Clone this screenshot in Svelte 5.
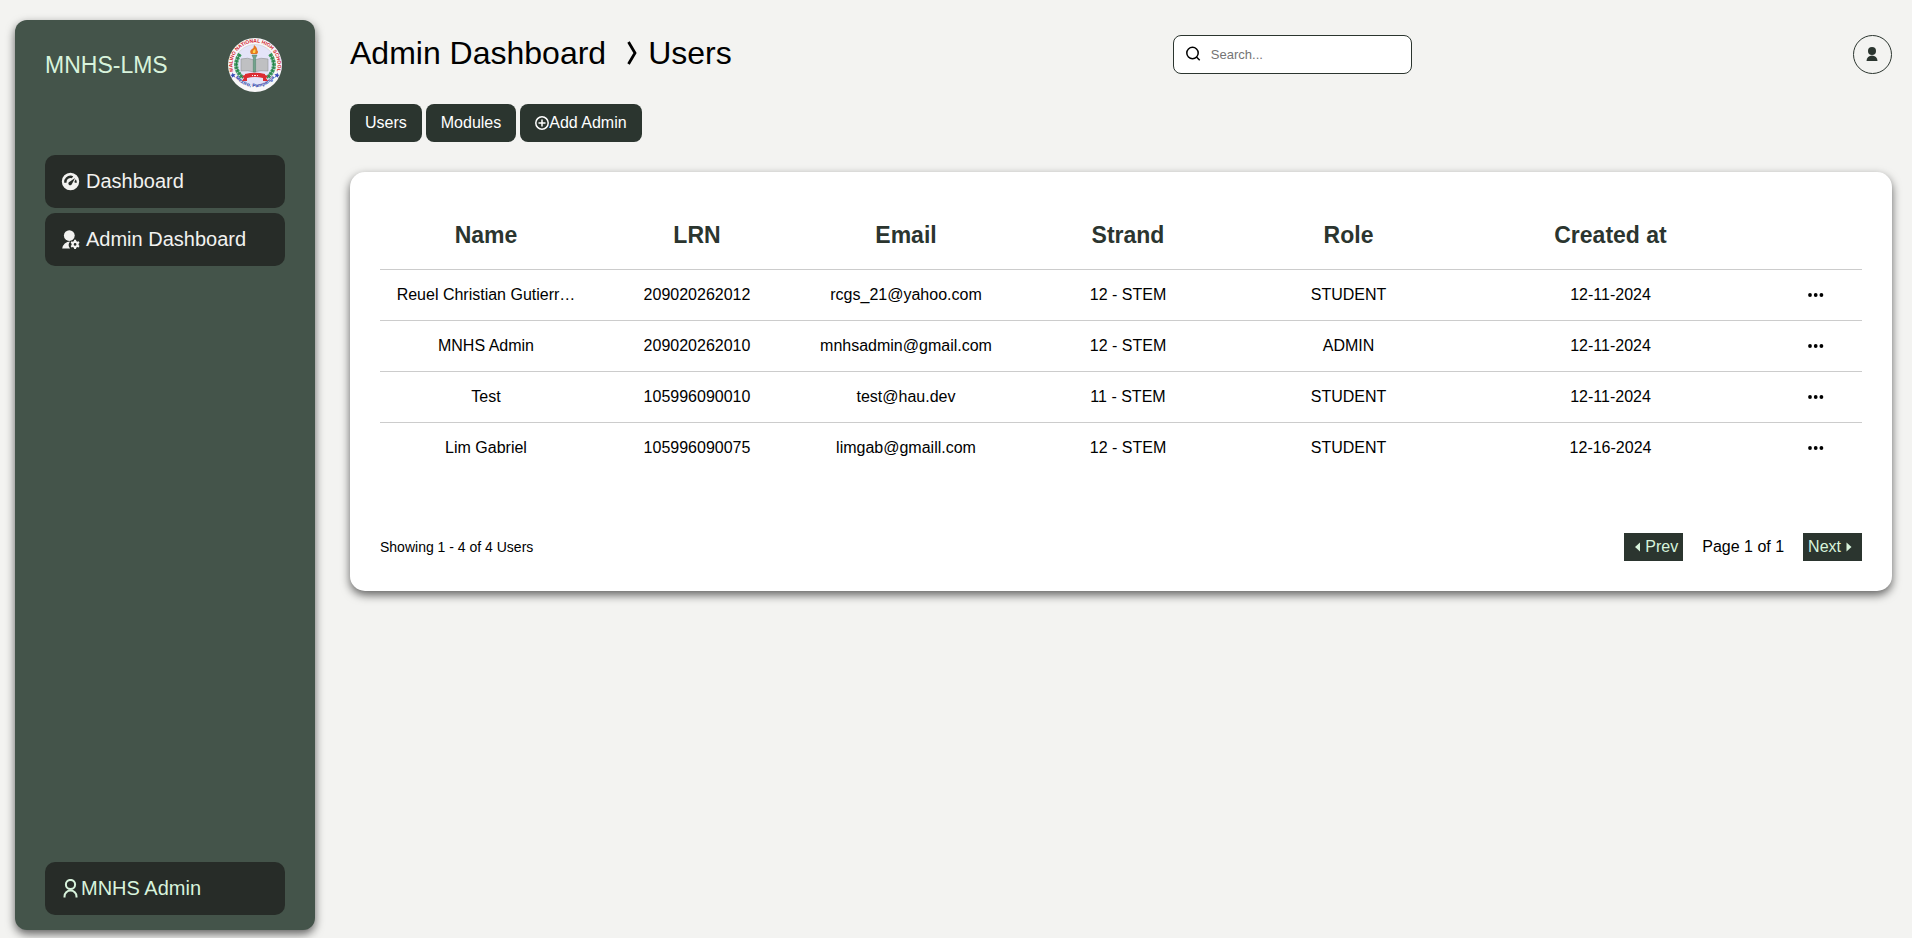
<script>
  const nav = [
    { label: 'Dashboard', icon: 'gauge' },
    { label: 'Admin Dashboard', icon: 'admin' }
  ];
  const columns = ['Name', 'LRN', 'Email', 'Strand', 'Role', 'Created at'];
  const users = [
    ['Reuel Christian Gutierr…', '209020262012', 'rcgs_21@yahoo.com', '12 - STEM', 'STUDENT', '12-11-2024'],
    ['MNHS Admin', '209020262010', 'mnhsadmin@gmail.com', '12 - STEM', 'ADMIN', '12-11-2024'],
    ['Test', '105996090010', 'test@hau.dev', '11 - STEM', 'STUDENT', '12-11-2024'],
    ['Lim Gabriel', '105996090075', 'limgab@gmaill.com', '12 - STEM', 'STUDENT', '12-16-2024']
  ];
  let search = $state('');
</script>

<div class="layout">
  <aside class="sidebar">
    <header class="brand">
      <span class="brand-name">MNHS-LMS</span>
      <svg class="logo" viewBox="0 0 54 54" aria-hidden="true">
        <defs>
          <path id="arc-top" d="M6 35.500A22.600 22.600 0 1 1 48 35.500" />
          <path id="arc-bottom" d="M4.500 34.500A24.600 24.600 0 0 0 49.500 34.500" />
        </defs>
        <circle cx="27" cy="27" r="27" fill="#f8f7f8" />
        <circle cx="27" cy="27" r="20.5" fill="#e4e4f8" stroke="#c9ccd2" stroke-width=".6" />
        <text class="seal red"><textPath href="#arc-top" startOffset="50%" text-anchor="middle">MALINO NATIONAL HIGH SCHOOL</textPath></text>
        <text class="seal blue"><textPath href="#arc-bottom" startOffset="50%" text-anchor="middle">Mexico, Pampanga</textPath></text>
        <path d="M4.600 34.600l1 1.700 2-.3-1.300 1.500.8 1.900-1.900-.8-1.500 1.300.2-2-1.800-1 2-.5zM49.400 34.600l-1 1.700-2-.3 1.300 1.500-.8 1.900 1.900-.8 1.500 1.300-.2-2 1.800-1-2-.5z" fill="#3347b4" />
        <path d="M12 16Q3 29 15 40M42 16Q51 29 39 40" fill="none" stroke="#3c9a5c" stroke-width="4" stroke-dasharray="2.6 .7" />
        <path d="M12 16Q3 29 15 40M42 16Q51 29 39 40" fill="none" stroke="#25804a" stroke-width="1" />
        <path d="M13 21q7-2 13 1 7-3 14-1v12q-7-1-14 1-6-2-13-1z" fill="#bfc0c2" stroke="#929397" stroke-width=".6" />
        <path d="M24 17h5l-1.400 3v14h-2.300V20z" fill="#72a48c" stroke="#4d7d67" stroke-width=".5" />
        <path d="M23 16q-2-3 1-5 2-1 2-4 4 3 3 5 2 2 0 4z" fill="#e37722" />
        <path d="M25 15q-1-2 2-4 1 2 0 4z" fill="#ffd34a" />
        <path d="M14 38l3-1v-1q10-2.500 20 0v1l3 1-2 2 2 3h-5v-3q-8-2-16 0v3h-5l2-3z" fill="#dc2c32" />
        <path d="M24 37.600h1m1 0h2m1 0h1" stroke="#fff" stroke-width="1" />
      </svg>
    </header>
    <nav class="nav">
      {#each nav as item}
        <a class="side-link" href="#{item.icon}">
          {#if item.icon === 'gauge'}
            <svg viewBox="0 0 24 24" fill="currentColor" aria-hidden="true">
              <path fill-rule="evenodd" d="M12 1a11 11 0 1 1 0 22 11 11 0 0 1 0-22zM12 4.500A8 8 0 0 0 4 12.500v1h3v-1a5 5 0 0 1 6.500-4.700l2-2.200A8 8 0 0 0 12 4.500zm5.800 3.200-6.900 4.500a2.300 2.300 0 1 0 2.900 2.900zM18.700 9l-1.600 2.700.2 1.800H20a8 8 0 0 0-1.300-4.500z" />
            </svg>
          {:else}
            <svg viewBox="0 0 24 24" fill="currentColor" aria-hidden="true">
              <circle cx="10.500" cy="7" r="6.800" />
              <path d="M1.500 23.500a10 10 0 0 1 10-9 7 7 0 0 0 0 9z" />
              <path fill-rule="evenodd" d="M16.300 14l.4-1.700h2.200l.4 1.700 1.300.8 1.700-.5 1.100 1.900-1.200 1.200v1.500l1.200 1.200-1.100 1.900-1.700-.5-1.300.8-.4 1.700h-2.200l-.4-1.700-1.300-.8-1.700.5-1.100-1.900 1.200-1.200v-1.500l-1.200-1.200 1.100-1.900 1.700.5zM17.800 16.500a1.700 1.700 0 1 0 0 3.400 1.700 1.700 0 0 0 0-3.400z" />
            </svg>
          {/if}
          <span>{item.label}</span>
        </a>
      {/each}
    </nav>
    <a class="side-link account" href="#account">
      <svg viewBox="0 0 20 20" fill="none" stroke="currentColor" stroke-width="2" aria-hidden="true">
        <circle cx="9.500" cy="5.500" r="4.600" />
        <path d="M3.500 18.500v-1a6 6 0 0 1 12 0v1" />
      </svg>
      <span>MNHS Admin</span>
    </a>
  </aside>

  <main class="main">
    <header class="topbar">
      <h1>
        <span>Admin Dashboard</span>
        <svg viewBox="0 0 32 32" fill="none" stroke="currentColor" stroke-width="2.800" aria-hidden="true">
          <path d="M12.500 5l6.500 11-6.500 11" />
        </svg>
        <span>Users</span>
      </h1>
      <label class="search">
        <svg viewBox="0 0 16 16" fill="none" stroke="currentColor" stroke-width="1.500" aria-hidden="true">
          <circle cx="7.500" cy="7" r="5.700" />
          <path d="M11.500 11l3.200 3.200" />
        </svg>
        <input type="text" placeholder="Search..." aria-label="Search" bind:value={search} />
      </label>
      <button class="avatar" aria-label="Profile">
        <svg viewBox="0 0 16 16" fill="currentColor" aria-hidden="true">
          <circle cx="8" cy="5" r="4" />
          <path d="M2.500 15a5.500 5.500 0 0 1 11 0z" />
        </svg>
      </button>
    </header>

    <div class="tabs">
      <button>Users</button>
      <button>Modules</button>
      <button>
        <svg viewBox="1 1 14 14" fill="none" stroke="currentColor" stroke-width="1.500" aria-hidden="true">
          <circle cx="8" cy="8" r="6.200" />
          <path d="M8 4.500v7M4.500 8h7" />
        </svg>
        <span>Add Admin</span>
      </button>
    </div>

    <section class="card">
      <table>
        <colgroup>
          <col class="c-name" /><col class="c-lrn" /><col class="c-email" /><col class="c-strand" />
          <col class="c-role" /><col class="c-created" /><col class="c-menu" />
        </colgroup>
        <thead>
          <tr>
            {#each columns as column}<th scope="col">{column}</th>{/each}
            <td></td>
          </tr>
        </thead>
        <tbody>
          {#each users as user}
            <tr>
              {#each user as cell}<td>{cell}</td>{/each}
              <td>
                <button class="more" aria-label="Actions for {user[0]}">
                  <svg viewBox="0 0 16 16" fill="currentColor" aria-hidden="true">
                    <circle cx="2" cy="8" r="1.900" /><circle cx="7.700" cy="8" r="1.900" /><circle cx="13.400" cy="8" r="1.900" />
                  </svg>
                </button>
              </td>
            </tr>
          {/each}
        </tbody>
      </table>
      <footer class="pager">
        <span class="count">Showing 1 - 4 of 4 Users</span>
        <div class="pages">
          <button>
            <svg viewBox="0 0 16 16" fill="currentColor" aria-hidden="true"><path d="M11 3.500v9L6 8z" /></svg>
            <span>Prev</span>
          </button>
          <span>Page 1 of 1</span>
          <button>
            <span>Next</span>
            <svg viewBox="0 0 16 16" fill="currentColor" aria-hidden="true"><path d="M5.500 3.500v9l5-4.500z" /></svg>
          </button>
        </div>
      </footer>
    </section>
  </main>
</div>

<style>
  :global(body) {
    margin: 0;
    background: #f3f3f1;
    font-family: "Liberation Sans", Arial, sans-serif;
    font-size: 16px;
    color: #000;
  }
  .layout, .layout :global(*) { box-sizing: border-box; }
  .layout {
    display: flex;
    gap: 35px;
    min-height: 100vh;
    padding: 20px 20px 8px 15px;
  }
  button {
    border: 0;
    padding: 0;
    font: inherit;
    cursor: pointer;
  }
  svg { display: block; flex: none; }

  .sidebar {
    display: flex;
    flex-direction: column;
    flex: 0 0 300px;
    padding: 15px 30px;
    border-radius: 12px;
    background: #44544a;
    box-shadow: 0 4px 10px rgba(0, 0, 0, 0.6);
    color: #d8f3dc;
  }
  .brand {
    display: flex;
    align-items: center;
    justify-content: space-between;
    height: 60px;
    padding-right: 3px;
    margin-bottom: 60px;
    font-size: 23px;
  }
  .logo { width: 54px; height: 54px; }
  .seal { font-weight: 700; font-size: 5px; }
  .red { fill: #d3242c; }
  .blue { fill: #2b3fae; }
  .nav {
    display: flex;
    flex-direction: column;
    gap: 5px;
    color: #f2f2f0;
  }
  .side-link {
    display: flex;
    align-items: center;
    gap: 6px;
    padding: 15px 16px;
    border-radius: 10px;
    background: #272c28;
    color: inherit;
    font-size: 20px;
    line-height: 23px;
    text-decoration: none;
  }
  .side-link svg { width: 19px; height: 19px; }
  .account {
    gap: 0;
    margin-top: auto;
  }
  .account svg { width: 20px; height: 20px; }

  .main { flex: 1; min-width: 0; }
  .topbar {
    display: flex;
    align-items: center;
    justify-content: space-between;
    height: 68px;
  }
  h1 {
    display: flex;
    align-items: center;
    margin: 0;
    padding-bottom: 2px;
    font-size: 32px;
    font-weight: 400;
    line-height: 36px;
  }
  h1 svg { width: 32px; height: 32px; margin-left: 10px; }
  .search {
    display: flex;
    align-items: center;
    gap: 10px;
    width: 239px;
    height: 39px;
    padding: 0 11px;
    border: 1px solid #2b352f;
    border-radius: 8px;
    background: #fff;
  }
  .search svg { width: 16px; height: 16px; }
  .search input {
    flex: 1;
    min-width: 0;
    border: 0;
    padding: 0;
    outline: 0;
    background: none;
    font-family: inherit;
    font-size: 13px;
  }
  .search input::placeholder { color: #757575; }
  .avatar {
    display: grid;
    place-items: center;
    width: 39px;
    height: 39px;
    border: 1px solid #2b352f;
    border-radius: 50%;
    background: none;
    color: #2b352f;
  }
  .avatar svg { width: 16px; height: 16px; }

  .tabs {
    display: flex;
    gap: 4px;
    margin: 16px 0 30px;
  }
  .tabs button {
    display: flex;
    align-items: center;
    padding: 10px 15px;
    border-radius: 8px;
    background: #2b352f;
    color: #fff;
    line-height: 18px;
  }
  .tabs svg { width: 14px; height: 14px; }

  .card {
    padding: 30px;
    border-radius: 15px;
    background: #fff;
    box-shadow: 0 4px 10px rgba(0, 0, 0, 0.6);
  }
  table {
    width: 100%;
    table-layout: fixed;
    border-collapse: collapse;
    text-align: center;
  }
  .c-name { width: 212px; }
  .c-lrn { width: 210px; }
  .c-email { width: 208px; }
  .c-strand { width: 236px; }
  .c-role { width: 205px; }
  .c-created { width: 319px; }
  .c-menu { width: 92px; }
  th {
    height: 67px;
    padding: 0;
    color: #2b352f;
    font-size: 23px;
  }
  tbody td {
    height: 51px;
    padding: 0;
    border-top: 1px solid #ccc;
    line-height: 18px;
    white-space: nowrap;
  }
  .more {
    display: block;
    margin: 0 auto;
    background: none;
    color: #000;
  }
  .more svg { width: 16px; height: 16px; }
  .pager {
    display: flex;
    align-items: center;
    justify-content: space-between;
    margin-top: 60px;
  }
  .count { font-size: 14px; }
  .pages {
    display: flex;
    align-items: center;
    gap: 19px;
  }
  .pages button {
    display: flex;
    align-items: center;
    padding: 5px;
    background: #2b352f;
    color: #d8f3dc;
    line-height: 18px;
  }
  .pages svg { width: 16px; height: 16px; }
</style>
